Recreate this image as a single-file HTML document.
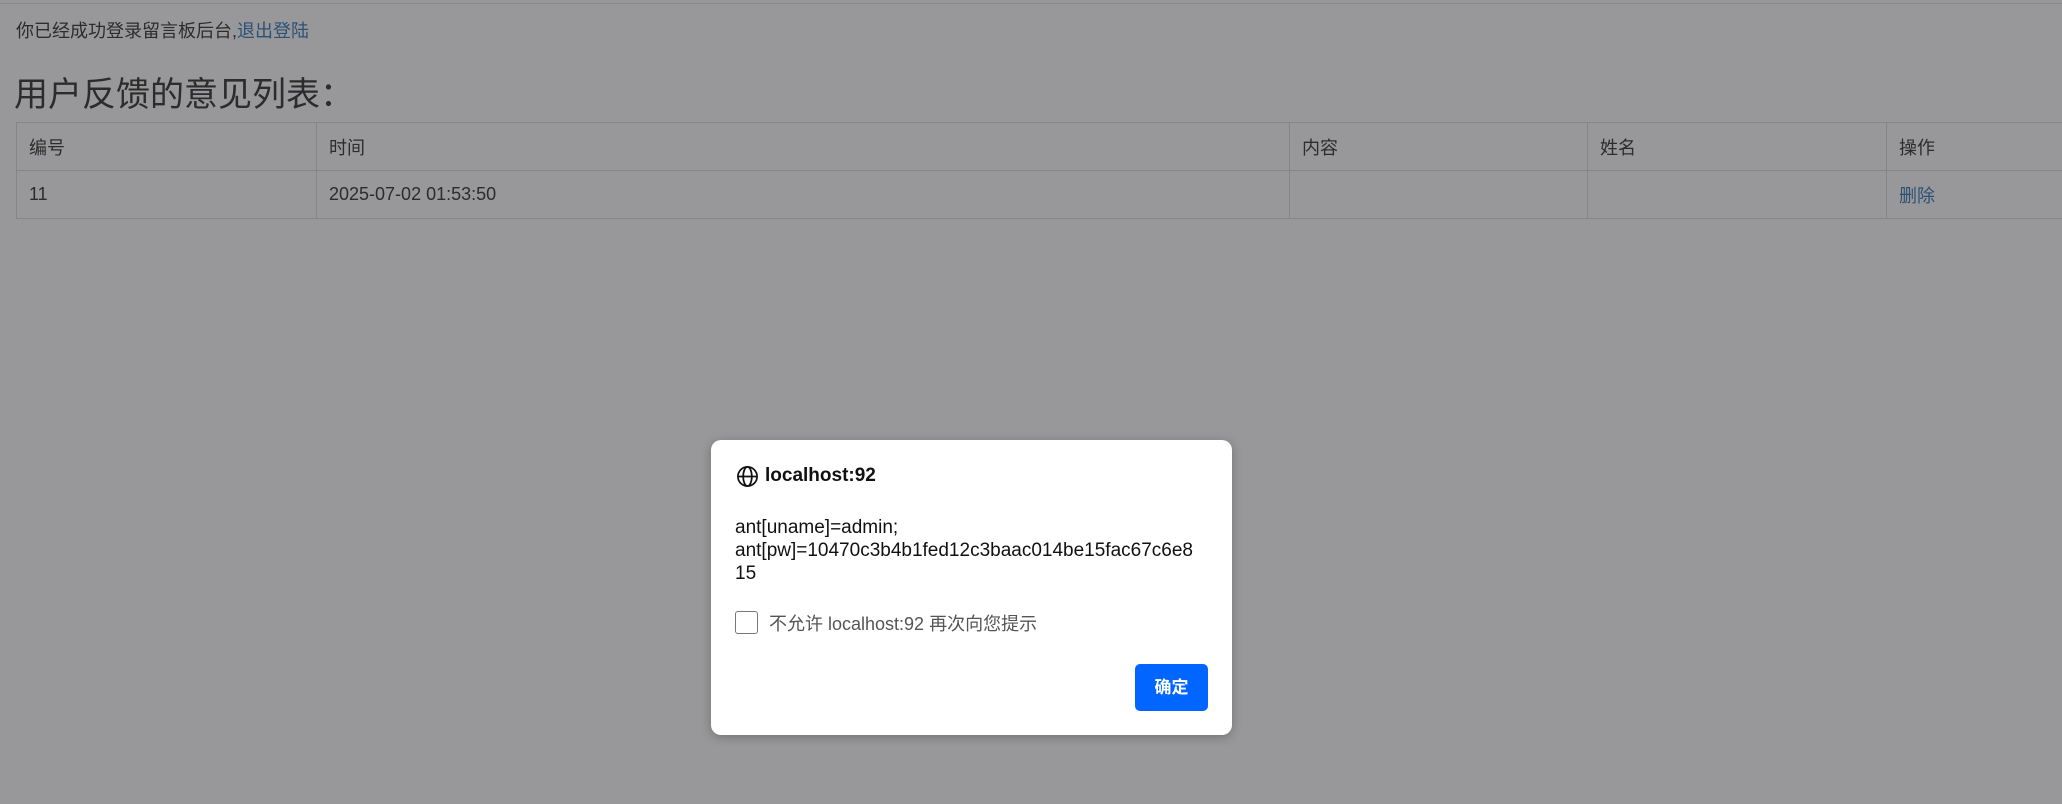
<!DOCTYPE html>
<html><head><meta charset="utf-8"><style>
html,body{margin:0;padding:0;width:2062px;height:804px;overflow:hidden;background:#98989a;font-family:"Liberation Sans","Noto Sans CJK SC",sans-serif;color:#2c2c2c;position:relative}
.topline{position:absolute;left:0;top:3px;width:2062px;height:1px;background:#8a8a8c}
.a{position:absolute;white-space:nowrap}
.link{color:#2b5175}
table{position:absolute;left:16px;top:122px;border-collapse:collapse;font-size:18px;table-layout:fixed;width:2170px}
td{border:1px solid #858587;height:48px;padding:0 0 0 12px;vertical-align:middle;box-sizing:border-box;white-space:nowrap}
.dlg{position:absolute;left:711px;top:440px;width:521px;height:295px;background:#fff;border-radius:10px;box-shadow:0 2px 10px rgba(0,0,0,.25)}
.dlg .a{color:#111}
</style></head><body>
<div class="topline"></div>
<div class="a" style="left:16px;top:17px;font-size:18px">你已经成功登录留言板后台,<span class="link">退出登陆</span></div>
<div class="a" style="left:14px;top:73px;font-size:34px;line-height:44px">用户反馈的意见列表：</div>
<table>
<colgroup><col style="width:300px"><col style="width:973px"><col style="width:298px"><col style="width:299px"><col style="width:300px"></colgroup>
<tr><td>编号</td><td>时间</td><td>内容</td><td>姓名</td><td>操作</td></tr>
<tr><td>11</td><td>2025-07-02 01:53:50</td><td></td><td></td><td><span class="link">删除</span></td></tr>
</table>
<div class="dlg">
<svg style="position:absolute;left:25px;top:25px" width="23" height="23" viewBox="0 0 24 24" fill="none" stroke="#111" stroke-width="1.8"><circle cx="12" cy="12" r="10"/><ellipse cx="12" cy="12" rx="4.5" ry="10"/><line x1="2" y1="12" x2="22" y2="12"/></svg>
<div class="a" style="left:54px;top:25px;font-size:19px;font-weight:bold">localhost:92</div>
<div class="a" style="left:24px;top:76px;font-size:19px;line-height:23px">ant[uname]=admin;<br>ant[pw]=10470c3b4b1fed12c3baac014be15fac67c6e8<br>15</div>
<div style="position:absolute;left:24px;top:171px;width:21px;height:21px;border:1.5px solid #777;border-radius:3px"></div>
<div class="a" style="left:58px;top:170px;font-size:18px;color:#555!important">不允许 localhost:92 再次向您提示</div>
<div style="position:absolute;left:424px;top:224px;width:73px;height:47px;background:#0066ff;border-radius:5px;color:#fff;font-weight:bold;font-size:17px;line-height:47px;text-align:center">确定</div>
</div>
</body></html>
